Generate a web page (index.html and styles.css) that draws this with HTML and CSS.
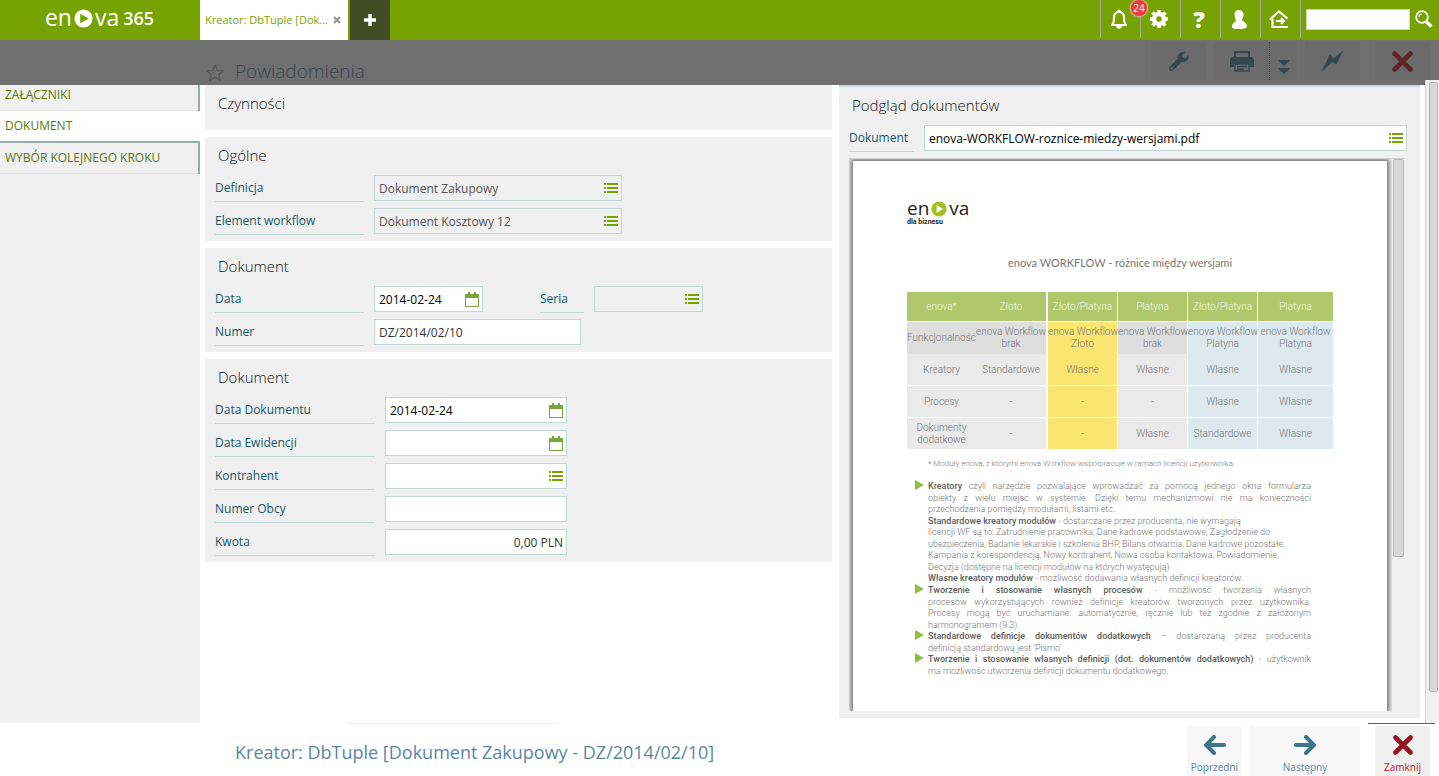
FILE: index.html
```html
<!DOCTYPE html>
<html lang="pl">
<head>
<meta charset="utf-8">
<title>enova365</title>
<link rel="stylesheet" href="styles.css">
</head>
<body>
<svg class="defs" aria-hidden="true">
  <symbol id="list" viewBox="0 0 14 11"><path d="M0 0h2v2H0zM3 0h11v2H3zM0 4h2v2H0zM3 4h11v2H3zM0 8h2v2H0zM3 8h11v2H3z" fill="#76a302"/></symbol>
  <symbol id="cal" viewBox="0 0 14 15"><path d="M0 2h3V0h2v2h4V0h2v2h3v13H0z" fill="#76a63c"/><path d="M1 6h12v8H1z" fill="#fff"/></symbol>
  <symbol id="cross" viewBox="0 0 20 20"><path d="M2.500 2.500l15 15M17.500 2.500l-15 15" stroke="currentColor" stroke-width="4.600" stroke-linecap="round"/></symbol>
</svg>

<header class="top">
  <div class="brand"><span>en</span><svg width="19" height="19" viewBox="0 0 20 20"><circle cx="10" cy="10" r="9.500" fill="#fff"/><path d="M6.500 5v10l9-5z" fill="#76a302"/></svg><span>va</span><b>365</b></div>
  <div class="tab"><span>Kreator: DbTuple [Dok...</span><button aria-label="Zamknij kartę"><svg width="8" height="8" viewBox="0 0 8 8"><path d="M1 1l6 6M7 1l-6 6" stroke="#999" stroke-width="2.400"/></svg></button></div>
  <button class="add" aria-label="Nowa karta"><svg width="12" height="12" viewBox="0 0 12 12"><path d="M6 0v12M0 6h12" stroke="#fff" stroke-width="3.400"/></svg></button>
  <nav class="tools">
    <button aria-label="Powiadomienia"><svg width="18" height="20" viewBox="0 0 18 20"><path d="M2 16c2-2 2-4 2-7.500C4 5 6 3 9 3s5 2 5 5.500c0 3.500 0 5.500 2 7.500z" fill="none" stroke="#fff" stroke-width="2" stroke-linejoin="round"/><path d="M7.500 2.500a1.500 1.500 0 0 1 3 0M6.500 17h5c0 3-5 3-5 0z" fill="#fff" stroke="#fff"/></svg><span class="badge">24</span></button>
    <button aria-label="Ustawienia"><svg width="20" height="20" viewBox="0 0 20 20"><circle cx="10" cy="10" r="5" fill="none" stroke="#fff" stroke-width="4.400"/><path d="M10 1v3M10 16v3M1 10h3M16 10h3M3.600 3.600l2.200 2.200M14.200 14.200l2.200 2.200M3.600 16.400l2.200-2.200M14.200 5.800l2.200-2.200" stroke="#fff" stroke-width="3.600"/></svg></button>
    <button aria-label="Pomoc" class="help">?</button>
    <button aria-label="Użytkownik"><svg width="16" height="19" viewBox="0 0 16 19"><path d="M3.500 4.500C3.500 2 5 0 8 0s4.500 2 4.500 5c0 2-1 3.500-1.500 5 1 2 4.500 2.500 5 6 0 2-2 3-8 3s-7-.5-7-3c0-3 3.500-3.500 4-5.500C4.500 9 3.500 6 3.500 4.500z" fill="#fff"/></svg></button>
    <button aria-label="Wyloguj"><svg width="20" height="19" viewBox="0 0 20 19"><path d="M1 9.500L10 1.500l8.500 7M3.500 9v8H19M7 11h8M12 8l3 3-3 3" fill="none" stroke="#fff" stroke-width="2.200"/></svg></button>
  </nav>
  <form class="search"><input aria-label="Szukaj"><button type="button" aria-label="Szukaj"><svg width="18" height="18" viewBox="0 0 18 18"><circle cx="7" cy="7" r="5.800" fill="none" stroke="#fff" stroke-width="1.800"/><path d="M3.800 7A3.300 3.300 0 0 1 7 3.800" fill="none" stroke="#fff"/><path d="M11 11.500l5.500 5" stroke="#fff" stroke-width="3.400"/></svg></button></form>
</header>

<div class="dim">
  <svg class="star" width="18" height="17" viewBox="0 0 18 17"><path d="M9 1l2.300 5.400 5.900.5-4.500 3.800 1.400 5.700L9 13.300l-5.100 3.100 1.400-5.700L.8 6.900l5.900-.5z" fill="none" stroke="#565656" stroke-width="1.200"/></svg>
  <h1>Powiadomienia</h1>
  <div class="acts">
    <button aria-label="Narzędzia"><svg width="21" height="21" viewBox="0 0 21 21"><path d="M3.500 17.500l9-9" stroke="#33474f" stroke-width="5" stroke-linecap="round"/><path d="M17.500.8l-3.300 3.400.5 2.500 2.500.5L20.400 4c1 4-2 7.500-6.400 7L9.500 7C9.500 3 13 0 17.500.8z" fill="#33474f"/><circle cx="3.800" cy="17.300" r="1.200" fill="#6b6b6b"/></svg></button>
    <div class="print"><button aria-label="Drukuj"><svg width="24" height="21" viewBox="0 0 24 21"><path d="M4 0h16v7H4zM2 6h20l2 2v8h-4v-3H4v3H0V8z" fill="#33474f"/><path d="M6 2h12v4H6zM6 14h12v5H6z" fill="#6b6b6b"/><path d="M5 13h14v7H5zM7 15.500h10M7 18h7" fill="none" stroke="#33474f" stroke-width="1.400"/></svg></button><button class="more" aria-label="Więcej"><svg width="12" height="14" viewBox="0 0 12 14"><path d="M0 0h12L6 6zM0 8h12l-6 6z" fill="#33474f"/></svg></button></div>
    <button aria-label="Akcje"><svg width="23" height="22" viewBox="0 0 23 22"><path d="M22.500 0L15.500 14.500l-4-2.500L0 22 9 4.500l3.500 4z" fill="#33474f"/></svg></button>
    <button class="shut" aria-label="Zamknij okno"><svg width="21" height="21"><use href="#cross"/></svg></button>
  </div>
</div>

<main>
  <nav class="side">
    <a href="#">ZAŁĄCZNIKI</a>
    <a href="#" class="on">DOKUMENT</a>
    <a href="#">WYBÓR KOLEJNEGO KROKU</a>
  </nav>
  <div class="form">
    <section><h2>Czynności</h2></section>
    <section>
      <h2>Ogólne</h2>
      <div class="row"><label for="f1">Definicja</label><div class="box off w-l"><input id="f1" value="Dokument Zakupowy" readonly><button aria-label="Lista"><svg width="14" height="11"><use href="#list"/></svg></button></div></div>
      <div class="row"><label for="f2">Element workflow</label><div class="box off w-l"><input id="f2" value="Dokument Kosztowy 12" readonly><button aria-label="Lista"><svg width="14" height="11"><use href="#list"/></svg></button></div></div>
    </section>
    <section>
      <h2>Dokument</h2>
      <div class="row"><label for="f3">Data</label><div class="box w-s"><input id="f3" value="2014-02-24"><button aria-label="Kalendarz"><svg width="14" height="15"><use href="#cal"/></svg></button></div><label for="f4" class="short">Seria</label><div class="box off w-s"><input id="f4" readonly><button aria-label="Lista"><svg width="14" height="11"><use href="#list"/></svg></button></div></div>
      <div class="row"><label for="f5">Numer</label><div class="box w-n"><input id="f5" class="soft" value="DZ/2014/02/10"></div></div>
    </section>
    <section class="wide">
      <h2>Dokument</h2>
      <div class="row"><label for="g1">Data Dokumentu</label><div class="box w-m"><input id="g1" value="2014-02-24"><button aria-label="Kalendarz"><svg width="14" height="15"><use href="#cal"/></svg></button></div></div>
      <div class="row"><label for="g2">Data Ewidencji</label><div class="box w-m"><input id="g2"><button aria-label="Kalendarz"><svg width="14" height="15"><use href="#cal"/></svg></button></div></div>
      <div class="row"><label for="g3">Kontrahent</label><div class="box w-m"><input id="g3"><button aria-label="Lista"><svg width="14" height="11"><use href="#list"/></svg></button></div></div>
      <div class="row"><label for="g4">Numer Obcy</label><div class="box w-m"><input id="g4"></div></div>
      <div class="row"><label for="g5">Kwota</label><div class="box w-m"><input id="g5" class="soft num" value="0,00 PLN"></div></div>
    </section>
  </div>
  <section class="preview">
    <h2>Podgląd dokumentów</h2>
    <div class="row"><label for="p1">Dokument</label><div class="box"><input id="p1" value="enova-WORKFLOW-roznice-miedzy-wersjami.pdf"><button aria-label="Lista"><svg width="14" height="11"><use href="#list"/></svg></button></div></div>
    <div class="viewer">
      <article class="page">
        <div class="doclogo"><span>en</span><svg width="16" height="16" viewBox="0 0 20 20"><circle cx="10" cy="10" r="9.500" fill="#a2bf1f"/><path d="M7 5v10l8-5z" fill="#fff"/></svg><span>va</span></div>
        <div class="tag">dla biznesu</div>
        <h3>enova WORKFLOW - różnice między wersjami</h3>
        <table>
          <colgroup><col class="c1"><col class="c2"><col class="c3"><col class="c3"><col class="c3"><col class="c4"></colgroup>
          <thead><tr><th>enova*</th><th>Złoto</th><th>Złoto/Platyna</th><th>Platyna</th><th>Złoto/Platyna</th><th>Platyna</th></tr></thead>
          <tbody>
            <tr class="sub"><td>Funkcjonalność</td><td>enova Workflow<br>brak</td><td>enova Workflow<br>Złoto</td><td>enova Workflow<br>brak</td><td>enova Workflow<br>Platyna</td><td>enova Workflow<br>Platyna</td></tr>
            <tr><td>Kreatory</td><td>Standardowe</td><td>Własne</td><td>Własne</td><td>Własne</td><td>Własne</td></tr>
            <tr><td>Procesy</td><td>-</td><td>-</td><td>-</td><td>Własne</td><td>Własne</td></tr>
            <tr><td>Dokumenty<br>dodatkowe</td><td>-</td><td>-</td><td>Własne</td><td>Standardowe</td><td>Własne</td></tr>
          </tbody>
        </table>
        <p class="note">* Moduły enova, z którymi enova Workflow współpracuje w ramach licencji użytkownika.</p>
        <ul>
          <li>
            <span class="full"><b>Kreatory</b> czyli narzędzie pozwalające wprowadzać za pomocą jednego okna formularza</span>
            <span class="full">obiekty z wielu miejsc w systemie. Dzięki temu mechanizmowi nie ma konieczności</span>
            <span>przechodzenia pomiędzy modułami, listami etc.</span>
            <span><b>Standardowe kreatory modułów</b> - dostarczane przez producenta, nie wymagają</span>
            <span>licencji WF są to: Zatrudnienie pracownika, Dane kadrowe podstawowe, Zagłodzenie do</span>
            <span>ubezpieczenia, Badanie lekarskie i szkolenia BHP, Bilans otwarcia, Dane kadrowe pozostałe,</span>
            <span>Kampania z korespondencją, Nowy kontrahent, Nowa osoba kontaktowa, Powiadomienie,</span>
            <span>Decyzja (dostępne na licencji modułów na których występują)</span>
            <span><b>Własne kreatory modułów</b> - możliwość dodawania własnych definicji kreatorów.</span>
          </li>
          <li>
            <span class="full"><b>Tworzenie i stosowanie własnych procesów</b> - możliwość tworzenia własnych</span>
            <span class="full">procesów wykorzystujących również definicje kreatorów tworzonych przez użytkownika.</span>
            <span class="full">Procesy mogą być uruchamiane: automatycznie, ręcznie lub też zgodnie z założonym</span>
            <span>harmonogramem (9.3).</span>
          </li>
          <li>
            <span class="full"><b>Standardowe definicje dokumentów dodatkowych</b> – dostarczaną przez producenta</span>
            <span>definicją standardową jest 'Pismo'</span>
          </li>
          <li>
            <span class="full"><b>Tworzenie i stosowanie własnych definicji (dot. dokumentów dodatkowych)</b> - użytkownik</span>
            <span>ma możliwość utworzenia definicji dokumentu dodatkowego.</span>
          </li>
        </ul>
      </article>
      <div class="bar"><i></i></div>
    </div>
  </section>
  <div class="scroll"><i></i></div>
</main>

<footer>
  <h2>Kreator: DbTuple [Dokument Zakupowy - DZ/2014/02/10]</h2>
  <button class="prev"><svg width="22" height="20" viewBox="0 0 22 20"><path d="M10 2L2 10l8 8M3 10h17" fill="none" stroke="#3c7489" stroke-width="4" stroke-linecap="round"/></svg>Poprzedni</button>
  <button class="next"><svg width="22" height="20" viewBox="0 0 22 20"><path d="M12 2l8 8-8 8M19 10H2" fill="none" stroke="#3c7489" stroke-width="4" stroke-linecap="round"/></svg>Następny</button>
  <button class="close"><svg width="20" height="20"><use href="#cross"/></svg><span>Zamknij</span></button>
</footer>
</body>
</html>
```
FILE: styles.css
```css
* { box-sizing: border-box; margin: 0; padding: 0; }
body {
  display: flex; flex-direction: column; height: 100vh; overflow: hidden;
  font: 12px/16px "Open Sans", "Noto Sans", sans-serif; color: #333; background: #fff;
}
button { border: 0; background: none; font: inherit; color: inherit; cursor: pointer; }
input { font: inherit; border: 0; background: none; outline: 0; }
a { text-decoration: none; }
svg { display: block; flex: none; }
.defs { display: none; }
h1, h2, h3 { font-weight: 400; }

.top { display: flex; flex: none; height: 40px; background: #76a302; }
.brand { display: flex; align-items: center; justify-content: center; width: 199px; margin-right: 1px; height: 36px; color: #fff; font-size: 23px; line-height: 24px; }
.brand svg { margin: 0 2px; }
.brand b { margin-left: 4px; font-size: 18px; font-weight: 600; }
.brand span { padding-bottom: 2px; }
.tab { display: flex; align-items: center; justify-content: space-between; width: 148px; padding: 0 7px 0 5px; background: #fff; color: #76a302; font-size: 11px; white-space: nowrap; }
.add { display: flex; align-items: center; justify-content: center; width: 40px; margin-left: 2px; background: #434b24; }
.tools { display: flex; margin-left: auto; }
.tools button { position: relative; display: flex; align-items: center; justify-content: center; width: 40px; height: 38px; padding-right: 3px; border-left: 1px solid #a3ad90; }
.tools .help { color: #fff; font-size: 23px; font-weight: 800; }
.badge { position: absolute; z-index: 1; top: 0; right: -7px; width: 16px; height: 16px; border-radius: 50%; background: #ea3c3c; box-shadow: 0 0 2px 1px #f3b7a8; color: #fff; font-size: 10px; line-height: 16px; }
.search { display: flex; align-items: center; gap: 5px; height: 38px; padding: 0 6px 0 5px; border-left: 1px solid #a3ad90; }
.search input { width: 104px; height: 21px; background: #fff; border: 1px solid #c3dcb9; }

.dim { display: flex; flex: none; height: 45px; padding: 2px 9px 0 206px; background: #6f6f6f; }
.star { margin-top: 22px; }
.dim h1 { margin: 17px 0 0 11px; font-size: 19px; font-weight: 300; line-height: 24px; color: #38444c; }
.acts { display: flex; margin-left: auto; height: 38px; color: #5c2629; }
.acts button { display: flex; align-items: center; justify-content: center; width: 55px; height: 38px; background: #6b6b6b; }
.acts .print { display: flex; margin: 0 8px; }
.acts .more { width: 28px; border-left: 1px dotted #33474f; padding-top: 12px; }
.acts .shut { margin-left: 15px; }

main { display: grid; grid-template-columns: 200px minmax(0, 632fr) minmax(0, 593fr) 14px; grid-template-rows: minmax(0, 1fr); flex: 1; min-height: 0; }
.side { background: #f0f0f0; }
.side a { display: block; height: 32px; padding: 8px 5px; color: #5b7a0b; border: 0 solid #9aaca8; border-right-width: 2px; box-shadow: inset 0 -1px #e4e4e4; }
.side a:first-child { height: 26px; padding-top: 2px; }
.side a.on { height: 30px; padding-top: 7px; background: #fff; border-right: 0; box-shadow: none; }
.side .on + a { border-top-width: 2px; border-top-right-radius: 2px; height: 33px; padding-top: 7px; }
.form { display: flex; flex-direction: column; gap: 7px; margin-left: 5px; }
.form section { display: flex; flex-direction: column; gap: 7px; padding: 0 10px 7px; background: #f0f0f0; }
.form h2, .preview h2 { height: 38px; padding-left: 3px; font-size: 15px; font-weight: 300; line-height: 36px; color: #111; }
.form h2 + .row, .preview h2 + .row { margin-top: -7px; }
.row { display: flex; height: 26px; gap: 10px; }
.row label { flex: none; width: 149px; height: 27px; padding-top: 5px; border-bottom: 1px solid #bfd8d3; color: #14586a; }
.wide .row label { width: 160px; }
.row .short { width: 44px; margin-left: 47px; }
.box { display: flex; align-items: center; height: 26px; padding: 0 3px 0 4px; border: 1px solid #bfd8d3; background: #fff; }
.box input { flex: 1; min-width: 0; height: 22px; color: #000; }
.box button { flex: none; }
.box.off { background: #f0f0f0; }
.box.off input { color: #555; }
.box .soft { color: #333; }
.box .num { text-align: right; }
.w-l { width: 248px; }
.w-s { width: 109px; }
.w-n { width: 207px; }
.w-m { width: 182px; }

.preview { display: flex; flex-direction: column; gap: 7px; margin: 0 5px 5px 7px; padding: 0 13px 7px 10px; background: #f0f0f0; border-top: 2px solid #c8d6de; }
.preview .row { flex: none; }
.preview .row label { width: 65px; }
.preview .box { flex: 1; }
.viewer { display: flex; flex: 1; min-height: 0; margin-right: 2px; border-top: 1px solid #d0d0d0; background: #f0f0f0; overflow: hidden; }
.page { flex: 1; margin: 2px 5px 0 4px; padding: 38px 54px 0; background: #fff; box-shadow: 0 0 5px 2px #666; color: #757575; font-family: Roboto, sans-serif; font-weight: 300; font-size: 9px; }
.bar { position: relative; width: 13px; padding: 0 1px; background: #f0f0f0; }
.bar i { display: block; width: 11px; height: 398px; border: 1px solid #b5b5b5; border-radius: 2px; background: #d7d7d7; }
.scroll { position: relative; z-index: 1; margin-top: -5px; padding: 2px 1px 0 3px; background: #f0f0f0; border-left: 1px solid #d5d5d5; }
.scroll i { display: block; height: 610px; border: 1px solid #b5b5b5; border-radius: 2px; background: #d7d7d7; }

.doclogo { display: flex; align-items: center; gap: 2px; height: 19px; font: 19px/16px "Open Sans", sans-serif; color: #222; }
.doclogo span { padding-bottom: 2px; }
.tag { font-size: 7px; line-height: 8px; font-weight: 700; color: #222; }
.page h3 { margin: 29px 0 21px; font-family: Lato, sans-serif; font-size: 11px; font-weight: 400; line-height: 16px; text-align: center; color: #777; }
.page table { width: 100%; table-layout: fixed; border-collapse: separate; border-spacing: 0; text-align: center; font-size: 10px; line-height: 12px; white-space: nowrap; }
.c1 { width: 69px; }
.c2 { width: 72px; }
.c3 { width: 70px; }
.c4 { width: 75px; }
.page th { height: 30px; background: #b0c86b; color: #f2f7e2; font-weight: 300; border-bottom: 1px solid #fff; }
.page td { height: 32px; background: #eaeaea; border-bottom: 1px solid #fff; }
.page th + th, .page td + td { border-right: 1px solid #fff; }
.page th:nth-child(2), .page td:nth-child(2) { border-right-width: 2px; }
.page th:last-child, .page td:last-child { border-right: 0; }
.page .sub td { background: #dedede; border-bottom: 0; }
.page td:nth-child(3), .page .sub td:nth-child(3) { background: #fae571; }
.page td:nth-child(n+5), .page .sub td:nth-child(n+5) { background: #dceaef; }
.note { margin: 9px 0 0 21px; font-size: 8px; line-height: 10px; white-space: nowrap; }
.page ul { margin: 11px 22px 0 21px; list-style: none; }
.page li { position: relative; }
.page li::before { content: ""; position: absolute; left: -13px; top: 0; border: solid transparent; border-width: 5px 0 5px 9px; border-left-color: #8cc03c; }
.page li span { display: block; height: 12px; line-height: 12px; white-space: nowrap; }
.page li span:nth-child(even) { height: 11px; }
.page li .full { white-space: normal; text-align: justify; text-align-last: justify; }
.page b { font-weight: 500; color: #5c5c5c; }

footer {
  display: flex; flex: none; height: 53px; padding: 3px 9px 0 235px;
  background: linear-gradient(#56616a, #56616a) right 4px top / 67px 1px no-repeat, linear-gradient(#e8eef2, #e8eef2) 348px 0 / 211px 1px no-repeat, #fff;
}
footer h2 { flex: 1; font-size: 18px; line-height: 52px; color: #5a87a0; white-space: nowrap; }
footer button { display: flex; flex-direction: column; align-items: center; justify-content: flex-end; gap: 4px; width: 55px; height: 50px; padding-bottom: 1px; background: #f7f7f7; color: #5a87a0; font-size: 10px; line-height: 16px; }
footer .next { width: 110px; margin: 0 15px 0 8px; }
footer .close { background: #f0f0f0; color: #961420; }
footer .close span { color: #c4121c; }
```
